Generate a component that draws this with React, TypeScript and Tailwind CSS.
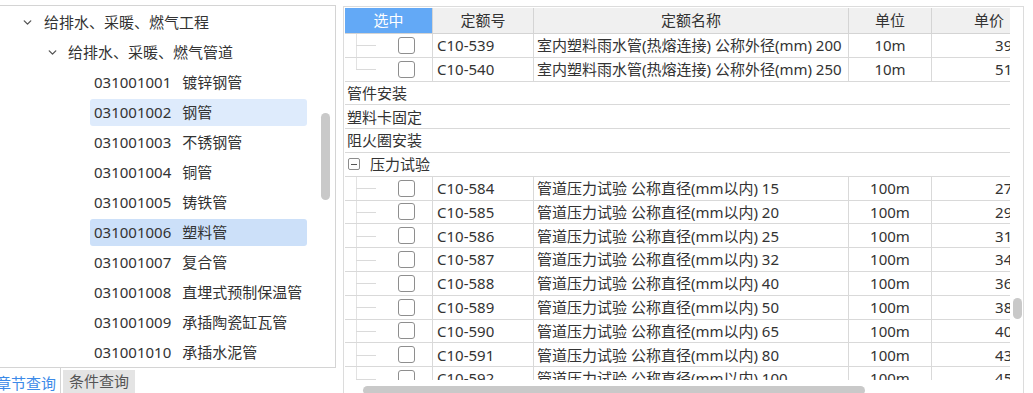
import React from 'react';
import { ChevronDown } from 'lucide-react';

interface TreeItem {
  code: string;
  name: string;
  state?: 'hover' | 'selected';
}

const TREE_ITEMS: TreeItem[] = [
  { code: '031001001', name: '镀锌钢管' },
  { code: '031001002', name: '钢管', state: 'hover' },
  { code: '031001003', name: '不锈钢管' },
  { code: '031001004', name: '铜管' },
  { code: '031001005', name: '铸铁管' },
  { code: '031001006', name: '塑料管', state: 'selected' },
  { code: '031001007', name: '复合管' },
  { code: '031001008', name: '直埋式预制保温管' },
  { code: '031001009', name: '承插陶瓷缸瓦管' },
  { code: '031001010', name: '承插水泥管' },
];

type Row =
  | { kind: 'item'; code: string; name: string; unit: string; price: string; last?: boolean }
  | { kind: 'group'; title: string; toggle?: boolean };

const PRESSURE = [
  ['584', '15', '273.18'],
  ['585', '20', '295.64'],
  ['586', '25', '318.20'],
  ['587', '32', '342.75'],
  ['588', '40', '366.31'],
  ['589', '50', '387.92'],
  ['590', '65', '405.47'],
  ['591', '80', '436.03'],
  ['592', '100', '458.66'],
];

const ROWS: Row[] = [
  { kind: 'item', code: 'C10-539', name: '室内塑料雨水管(热熔连接) 公称外径(mm) 200', unit: '10m', price: '396.52' },
  { kind: 'item', code: 'C10-540', name: '室内塑料雨水管(热熔连接) 公称外径(mm) 250', unit: '10m', price: '512.87', last: true },
  { kind: 'group', title: '管件安装' },
  { kind: 'group', title: '塑料卡固定' },
  { kind: 'group', title: '阻火圈安装' },
  { kind: 'group', title: '压力试验', toggle: true },
  ...PRESSURE.map(
    ([n, d, p]): Row => ({
      kind: 'item',
      code: `C10-${n}`,
      name: `管道压力试验 公称直径(mm以内) ${d}`,
      unit: '100m',
      price: p,
    }),
  ),
];

const TreeRow: React.FC<{ item: TreeItem }> = ({ item }) => (
  <div className="h-[30px] flex items-center pl-[90px] pr-[28px]">
    <div
      className={`flex-1 h-[27px] flex items-center gap-[11px] pl-[4px] rounded-[3px] ${
        item.state === 'selected' ? 'bg-[#cce0f9]' : item.state === 'hover' ? 'bg-[#deebfc]' : ''
      }`}
    >
      <span>{item.code}</span>
      <span>{item.name}</span>
    </div>
  </div>
);

const TableRow: React.FC<{ row: Row }> = ({ row }) => {
  if (row.kind === 'group') {
    return (
      <div className="h-[23.8px] flex items-center border-b border-[#d9d9d9] pl-[2px] shrink-0">
        {row.toggle && (
          <span className="w-[12px] h-[12px] border border-[#8c8c8c] rounded-[2px] flex items-center justify-center mr-[10px] ml-[1px]">
            <span className="w-[6px] h-px bg-[#555]" />
          </span>
        )}
        <span>{row.title}</span>
      </div>
    );
  }
  return (
    <div className="h-[23.8px] flex border-b border-[#d9d9d9] shrink-0">
      <div className="w-[88px] relative border-r border-[#d9d9d9] flex items-center shrink-0">
        <span
          className={`absolute left-[11px] top-0 w-px bg-[#e2e2e2] ${row.last ? 'h-1/2' : 'h-full'}`}
        />
        <span className="absolute left-[11px] top-1/2 w-[20px] h-px bg-[#dadada]" />
        <span className="ml-[53px] w-[17px] h-[17px] border border-[#8e8e8e] rounded-[3px] bg-white" />
      </div>
      <div className="w-[101px] border-r border-[#d9d9d9] flex items-center pl-[4px] shrink-0">{row.code}</div>
      <div className="w-[315px] border-r border-[#d9d9d9] flex items-center pl-[3px] shrink-0 whitespace-nowrap">
        {row.name}
      </div>
      <div className="w-[83px] border-r border-[#d9d9d9] flex items-center justify-center shrink-0">{row.unit}</div>
      <div className="w-[114px] flex items-center justify-end pr-[4px] shrink-0">{row.price}</div>
    </div>
  );
};

export default function App() {
  return (
    <div className="w-[1033px] h-[393px] bg-white flex overflow-hidden text-[15px] text-[#333] font-['Noto_Sans','Noto_Sans_CJK_SC',sans-serif]">
      {/* Left: chapter tree */}
      <div className="w-[336px] flex flex-col shrink-0">
        <div className="mt-[5px] h-[363px] border-t border-r border-b border-[#d4d4d4] relative pt-[1px]">
          <div className="h-[30px] flex items-center pl-[21px] gap-[10px]">
            <ChevronDown className="w-[13px] h-[13px] text-[#555]" strokeWidth={2.5} />
            <span>给排水、采暖、燃气工程</span>
          </div>
          <div className="h-[30px] flex items-center pl-[46px] gap-[9px]">
            <ChevronDown className="w-[13px] h-[13px] text-[#555]" strokeWidth={2.5} />
            <span>给排水、采暖、燃气管道</span>
          </div>
          {TREE_ITEMS.map((item) => (
            <TreeRow key={item.code} item={item} />
          ))}
          {/* scrollbar thumb */}
          <div className="absolute left-[321px] top-[107px] w-[9px] h-[87px] rounded-full bg-[#c9c9c9]" />
        </div>
        {/* Bottom tabs */}
        <div className="flex-1 flex items-end">
          <div className="h-full flex items-center pr-[4px] border-r border-[#d4d4d4] -ml-[4px] pt-[6px] whitespace-nowrap shrink-0">
            <span className="text-[#3c8ae8] leading-none">章节查询</span>
          </div>
          <div className="ml-[2px] h-[23px] bg-[#e4e4e4] px-[6px] flex items-center text-[#555] whitespace-nowrap shrink-0">
            条件查询
          </div>
        </div>
      </div>

      {/* Right: quota table */}
      <div className="ml-[7px] mt-[6px] w-[681px] border-t border-l border-r border-[#dcdcdc] p-[1px] pb-0 flex flex-col relative">
        <div className="w-[665px] h-[372px] overflow-hidden flex flex-col">
          <div className="h-[26px] flex border-b border-[#d4d4d4] bg-[#f0f0f0] shrink-0 w-max">
            <div className="w-[88px] bg-[#63a9f6] text-white border-r border-[#d4d4d4] flex items-center justify-center">
              选中
            </div>
            <div className="w-[101px] border-r border-[#d4d4d4] flex items-center justify-center">定额号</div>
            <div className="w-[315px] border-r border-[#d4d4d4] flex items-center justify-center">定额名称</div>
            <div className="w-[83px] border-r border-[#d4d4d4] flex items-center justify-center">单位</div>
            <div className="w-[114px] flex items-center justify-center">单价</div>
          </div>
          <div className="w-[701px] flex flex-col">
            {ROWS.map((row, i) => (
              <TableRow key={i} row={row} />
            ))}
          </div>
        </div>
        {/* scrollbars */}
        <div className="absolute left-[669px] top-[291px] w-[9px] h-[21px] rounded-full bg-[#c9c9c9]" />
        <div className="flex-1 relative">
          <div className="absolute left-[18px] top-[6px] w-[502px] h-[9px] rounded-full bg-[#c9c9c9]" />
        </div>
      </div>
    </div>
  );
}
